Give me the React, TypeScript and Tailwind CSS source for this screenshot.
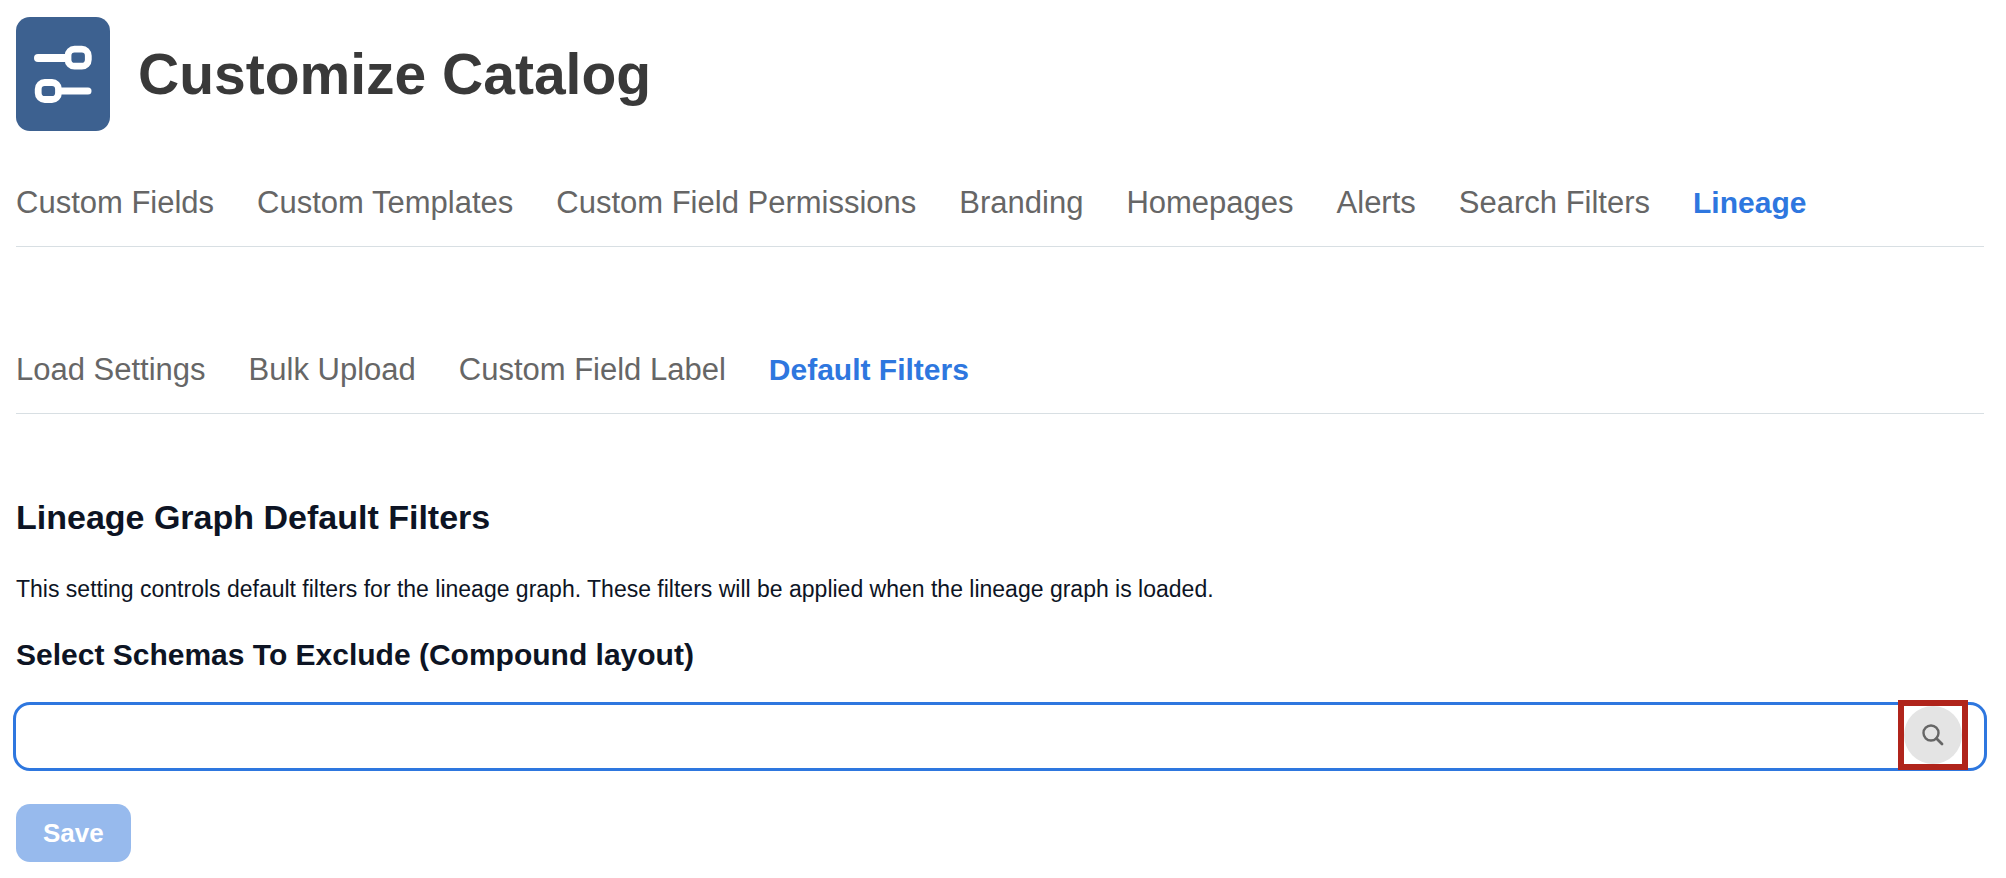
import { useState } from "react";

const mainTabs = [
  "Custom Fields",
  "Custom Templates",
  "Custom Field Permissions",
  "Branding",
  "Homepages",
  "Alerts",
  "Search Filters",
  "Lineage",
];

const lineageTabs = ["Load Settings", "Bulk Upload", "Custom Field Label", "Default Filters"];

const SlidersIcon = () => (
  <svg width="94" height="114" viewBox="0 0 94 114" fill="none" stroke="white" strokeLinecap="round" aria-hidden="true">
    <path d="M22 41H50" strokeWidth="8" />
    <rect x="52" y="32.2" width="20.3" height="17" rx="6.5" strokeWidth="6.8" />
    <path d="M46 74H72" strokeWidth="7" />
    <rect x="22.2" y="65.5" width="20.3" height="17" rx="6.5" strokeWidth="6.8" />
  </svg>
);

const SearchIcon = () => (
  <svg width="22" height="22" viewBox="0 0 22 22" fill="none" stroke="#666" strokeWidth="2.4" strokeLinecap="round" aria-hidden="true">
    <circle cx="9" cy="9" r="7.5" />
    <path d="M14.5 14.5L20 20" strokeWidth="2.8" />
  </svg>
);

const Tabs = ({ items, initial, label }: { items: string[]; initial: string; label: string }) => {
  const [active, setActive] = useState(initial);

  return (
    <nav aria-label={label} className="flex flex-wrap gap-x-[43px] border-b border-[#d8dfe3] pb-[23px]">
      {items.map((item) => (
        <button
          key={item}
          type="button"
          onClick={() => setActive(item)}
          className={
            item === active
              ? "cursor-pointer text-[30px] leading-10 font-bold text-[#2e77df]"
              : "cursor-pointer text-[31px] leading-10 text-[#666]"
          }
        >
          {item}
        </button>
      ))}
    </nav>
  );
};

const App = () => {
  const [schemas, setSchemas] = useState("");

  return (
    <main className="bg-white pt-[17px] pr-[22px] pb-4 pl-4 font-['Liberation_Sans',Arial,sans-serif] text-[#0d1424]">
      <header className="mb-[52px] flex items-center gap-7">
        <div className="shrink-0 rounded-[14px] bg-[#3d6190]">
          <SlidersIcon />
        </div>
        <h1 className="text-[57px] leading-[72px] font-bold text-[#393939]">Customize Catalog</h1>
      </header>

      <Tabs items={mainTabs} initial="Lineage" label="Catalog settings" />
      <div className="mt-[103px]">
        <Tabs items={lineageTabs} initial="Default Filters" label="Lineage settings" />
      </div>

      <section className="mt-[83px]">
        <h2 className="text-[34px] leading-10 font-bold">Lineage Graph Default Filters</h2>
        <p className="mt-9 text-[23px] leading-8">
          This setting controls default filters for the lineage graph. These filters will be applied when the lineage graph is loaded.
        </p>
        <label htmlFor="schemas" className="mt-[30px] block text-[30px] leading-10 font-bold">
          Select Schemas To Exclude (Compound layout)
        </label>

        {/* Schema picker */}
        <div className="-mx-[3px] mt-[27px] flex h-[69px] items-start rounded-[17px] border-3 border-[#2e77df] pr-4">
          <input
            id="schemas"
            type="text"
            value={schemas}
            onChange={(e) => setSchemas(e.target.value)}
            className="h-full min-w-0 flex-1 rounded-[14px] px-4 text-[23px] outline-none"
          />
          <div className="-mt-[5px] size-[70px] shrink-0 border-6 border-[#b0241b] bg-white">
            <button
              type="button"
              aria-label="Search schemas"
              className="flex size-[58px] cursor-pointer items-center justify-center rounded-full bg-[#e4e4e4]"
            >
              <SearchIcon />
            </button>
          </div>
        </div>

        <button type="button" disabled className="mt-[33px] h-[58px] rounded-[14px] bg-[#97baed] px-[27px] text-[26px] leading-8 font-bold text-white">
          Save
        </button>
      </section>
    </main>
  );
};

export default App;
